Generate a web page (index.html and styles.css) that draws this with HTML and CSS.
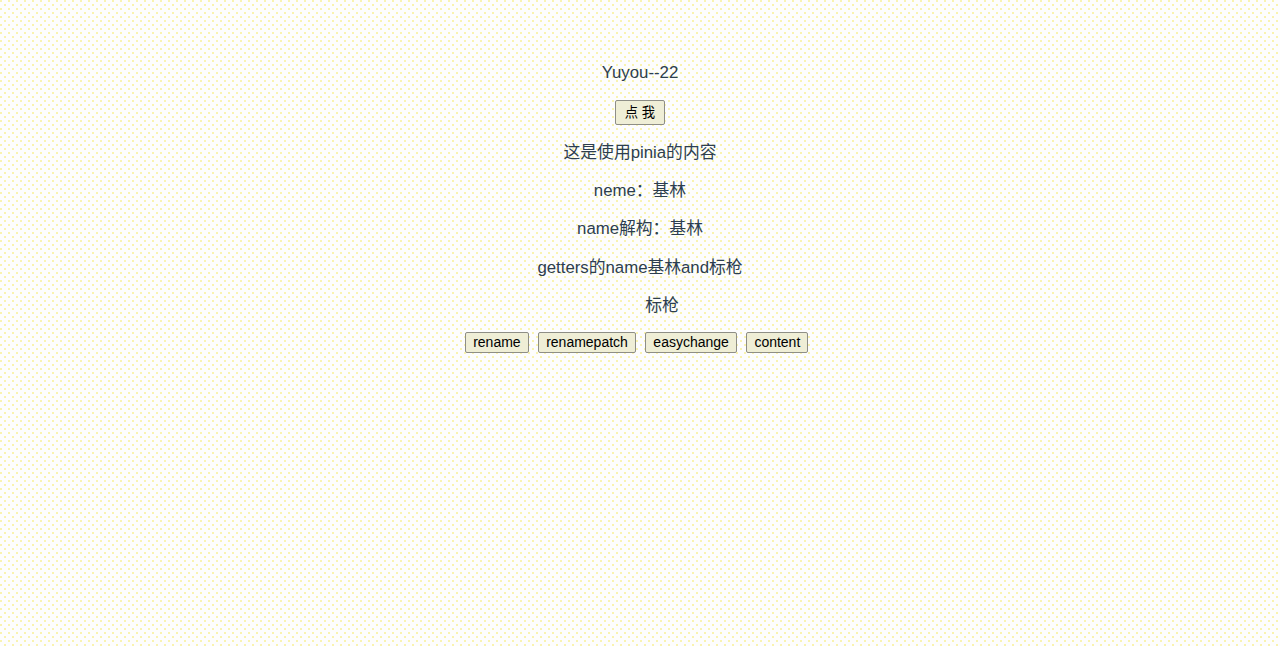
FILE: index.html
```html
<!DOCTYPE html>
<html lang="zh">
<head>
<meta charset="utf-8">
<title>pinia</title>
<link rel="stylesheet" href="styles.css">
</head>
<body>
<div class="app">
  <p class="line">Yuyou--22</p>
  <div class="single"><button class="btn btn-cjk">点 我</button></div>
  <p class="line">这是使用pinia的内容</p>
  <p class="line">neme：基林</p>
  <p class="line">name解构：基林</p>
  <p class="line">getters的name基林and标枪</p>
  <p class="line line-shifted">标枪</p>
  <div class="actions">
    <button class="btn">rename</button>
    <button class="btn">renamepatch</button>
    <button class="btn">easychange</button>
    <button class="btn">content</button>
  </div>
</div>
</body>
</html>
```

FILE: styles.css
```css
html, body {
  height: 100%;
}
body {
  margin: 0;
  background-color: #fdfdfd;
  background-image:
    radial-gradient(circle at 1px 1px, #f9f3b0 0.8px, transparent 1px),
    radial-gradient(circle at 5px 5px, #f9f3b0 0.8px, transparent 1px);
  background-size: 8px 8px, 8px 8px;
}
.app {
  padding-top: 62px;
  text-align: center;
  color: #2c3e50;
  font-family: "Liberation Sans", Arial, "Noto Sans CJK SC", sans-serif;
  font-size: 16.8px;
}
.line {
  margin: 0 0 16px;
  line-height: 22.25px;
}
.line-shifted {
  margin-top: 16px;
  margin-bottom: 15px;
  padding-left: 44px;
}
.single {
  display: flex;
  justify-content: center;
  margin: 15px 0 16.5px;
}
.actions {
  display: flex;
  justify-content: center;
  gap: 9px;
  padding-right: 7px;
}
.btn {
  font-family: "Liberation Sans", Arial, "Noto Sans CJK SC", sans-serif;
  font-size: 14px;
  color: #000;
  background: #efeed6;
  border: 1px solid #8e8e86;
  border-radius: 2px;
  padding: 2px 7px 2px 7.5px;
  line-height: 15px;
  height: 21px;
  margin: 0;
}
.btn-cjk {
  font-size: 13.33px;
  height: 25px;
  line-height: 19px;
  padding: 2px 9px;
}
```
